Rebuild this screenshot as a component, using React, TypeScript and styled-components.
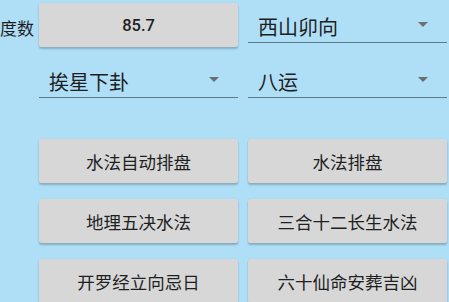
import React from 'react';
import styled, { createGlobalStyle } from 'styled-components';

const GlobalStyle = createGlobalStyle`
  html, body {
    margin: 0;
    padding: 0;
    background: #aedff7;
    overflow: hidden;
  }
  body {
    font-family: "Noto Sans CJK SC", Roboto, sans-serif;
    color: #222;
  }
`;

const Screen = styled.div`
  width: 449px;
  height: 302px;
  background: #aedff7;
  padding-top: 3px;
  box-sizing: border-box;
  overflow: hidden;
`;

const Grid = styled.div`
  display: grid;
  grid-template-columns: 29px 199px 199px;
  column-gap: 10px;
  align-items: start;
`;

const Label = styled.div`
  height: 44px;
  display: flex;
  align-items: center;
  padding-top: 2px;
  font-size: 17px;
  white-space: nowrap;
  color: #1e1e1e;
`;

const RaisedButton = styled.div<{ $bold?: boolean }>`
  height: 44px;
  display: flex;
  align-items: center;
  justify-content: center;
  background: #d7d7d7;
  border-radius: 2px;
  box-shadow: 0 2px 2px rgba(0, 0, 0, 0.22), 0 0 1px rgba(0, 0, 0, 0.12);
  font-family: ${({ $bold }) => ($bold ? 'Roboto, sans-serif' : '"Noto Sans CJK SC", sans-serif')};
  font-weight: ${({ $bold }) => ($bold ? 500 : 400)};
  font-size: ${({ $bold }) => ($bold ? '16.5px' : '17.5px')};
  color: #1f1f1f;
`;

const Spinner = styled.div<{ $top: number }>`
  margin-top: ${({ $top }) => $top}px;
  height: 32px;
  padding: 6px 19px 0 10px;
  display: flex;
  align-items: center;
  justify-content: space-between;
  border-bottom: 1.5px solid #5d7b89;
  font-size: 20px;
  color: #1e1e1e;
`;

const Caret = styled.span`
  width: 0;
  height: 0;
  border-left: 5px solid transparent;
  border-right: 5px solid transparent;
  border-top: 5px solid #6b6f72;
  margin-top: -4px;
`;

const Spacer = styled.div<{ $h: number }>`
  grid-column: 1 / -1;
  height: ${({ $h }) => $h}px;
`;

const ButtonRow = styled.div`
  grid-column: 2 / 4;
  display: grid;
  grid-template-columns: 199px 199px;
  column-gap: 10px;
  margin-bottom: 16px;
`;

const Select: React.FC<{ value: string; top: number }> = ({ value, top }) => (
  <Spinner $top={top}>
    <span>{value}</span>
    <Caret />
  </Spinner>
);

const actions = [
  ['水法自动排盘', '水法排盘'],
  ['地理五决水法', '三合十二长生水法'],
  ['开罗经立向忌日', '六十仙命安葬吉凶'],
];

export default function App() {
  return (
    <Screen>
      <GlobalStyle />
      <Grid>
        <Label>度数</Label>
        <RaisedButton $bold>85.7</RaisedButton>
        <Select value="西山卯向" top={1} />
        <Spacer $h={10} />
        <div />
        <Select value="挨星下卦" top={0} />
        <Select value="八运" top={0} />
        <Spacer $h={41} />
        {actions.map(([a, b]) => (
          <ButtonRow key={a}>
            <RaisedButton>{a}</RaisedButton>
            <RaisedButton>{b}</RaisedButton>
          </ButtonRow>
        ))}
      </Grid>
    </Screen>
  );
}
